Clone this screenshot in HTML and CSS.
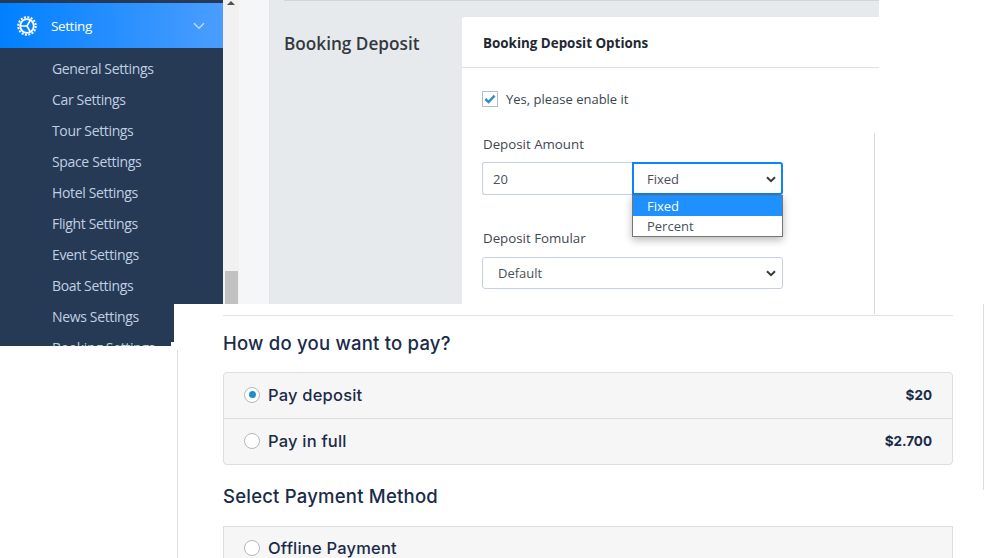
FILE: index.html
```html
<!DOCTYPE html>
<html lang="en">
<head>
<meta charset="utf-8">
<title>Booking Deposit</title>
<link rel="stylesheet" href="styles.css">
</head>
<body>
<div class="canvas">
  <section class="admin">
    <nav class="sidebar">
      <a class="active-item">
        <svg class="gear" viewBox="0 0 20 20" width="20" height="20" aria-hidden="true">
          <circle cx="10" cy="10" r="6.8" fill="none" stroke="#fff" stroke-width="1.8"/>
          <circle cx="10" cy="10" r="8.8" fill="none" stroke="#fff" stroke-width="2" stroke-dasharray="2 1.46"/>
          <path d="M10 10V3.5M10 10L4.4 13.3M10 10l5.6 3.3" transform="rotate(30 10 10)" fill="none" stroke="#fff" stroke-width="1.6"/>
        </svg>
        <span class="active-label">Setting</span>
        <svg class="chevron" viewBox="0 0 12 8" width="12" height="8" aria-hidden="true">
          <path d="M1 1.2l5 5 5-5" fill="none" stroke="#b9d8ff" stroke-width="1.6"/>
        </svg>
      </a>
      <ul class="submenu">
        <li>General Settings</li>
        <li>Car Settings</li>
        <li>Tour Settings</li>
        <li>Space Settings</li>
        <li>Hotel Settings</li>
        <li>Flight Settings</li>
        <li>Event Settings</li>
        <li>Boat Settings</li>
        <li>News Settings</li>
        <li>Booking Settings</li>
      </ul>
    </nav>
    <div class="scrollbar">
      <span class="scroll-arrow"></span>
      <span class="scroll-thumb"></span>
    </div>
    <div class="gutter"></div>
    <main class="content">
      <h2 class="section-title">Booking Deposit</h2>
      <div class="card">
        <header class="card-head">Booking Deposit Options</header>
        <div class="card-body">
          <label class="check-row">
            <span class="checkbox">
              <svg viewBox="0 0 12 10" width="12" height="10" aria-hidden="true">
                <path d="M1.3 5l3.3 3 6-6.4" fill="none" stroke="#2e8fd0" stroke-width="2.4"/>
              </svg>
            </span>
            Yes, please enable it
          </label>
          <div class="field-label">Deposit Amount</div>
          <div class="input-group">
            <div class="text-input">20</div>
            <div class="select focused">Fixed
              <svg class="caret" viewBox="0 0 10 7" width="10" height="7" aria-hidden="true"><path d="M1 1.2l4 4 4-4" fill="none" stroke="#343a40" stroke-width="2"/></svg>
            </div>
          </div>
          <div class="field-label second">Deposit Fomular</div>
          <div class="select wide">Default
            <svg class="caret" viewBox="0 0 10 7" width="10" height="7" aria-hidden="true"><path d="M1 1.2l4 4 4-4" fill="none" stroke="#343a40" stroke-width="2"/></svg>
          </div>
        </div>
      </div>
    </main>
  </section>

  <span class="rule-right"></span>

  <section class="checkout">
    <span class="rule-top"></span>
    <h3 class="pay-title first">How do you want to pay?</h3>
    <div class="options">
      <div class="option">
        <span class="radio on"></span><span class="option-name">Pay deposit</span><span class="price">$20</span>
      </div>
      <div class="option">
        <span class="radio"></span><span class="option-name">Pay in full</span><span class="price">$2.700</span>
      </div>
    </div>
    <h3 class="pay-title">Select Payment Method</h3>
    <div class="options open">
      <div class="option">
        <span class="radio"></span><span class="option-name">Offline Payment</span>
      </div>
    </div>
  </section>

  <span class="notch"></span>
  <span class="rule-left"></span>
  <span class="rule-far"></span>

  <div class="dropdown">
    <div class="dropdown-item selected">Fixed</div>
    <div class="dropdown-item">Percent</div>
  </div>
</div>
</body>
</html>
```

FILE: styles.css
```css
* { box-sizing: border-box; }
html, body { margin: 0; padding: 0; background: #fff; }
body { font-family: "Open Sans", "Noto Sans", sans-serif; color: #212529; }
.canvas { position: relative; width: 988px; height: 558px; overflow: hidden; }

/* top screenshot */
.admin { position: absolute; left: 0; top: 0; width: 879px; height: 346px; display: flex; overflow: hidden; align-items: flex-start; }
.sidebar { width: 223px; height: 346px; flex: none; background: #263a55; padding-top: 3px; overflow: hidden; }
.active-item { display: flex; align-items: center; height: 45px; padding-left: 17px; background: linear-gradient(90deg, #0080ff, #4b9dff); color: #fff; }
.gear { flex: none; }
.active-label { margin-left: 14px; font-size: 13.5px; letter-spacing: -0.4px; }
.chevron { margin-left: auto; margin-right: 18px; }
.submenu { list-style: none; margin: 0; padding: 5px 0 0 52px; color: #c0cfe2; font-size: 14px; letter-spacing: -0.35px; }
.submenu li { height: 31px; line-height: 31px; white-space: nowrap; }

.scrollbar { width: 16px; height: 304px; flex: none; background: #f1f1f1; display: flex; flex-direction: column; align-items: center; justify-content: space-between; }
.scroll-arrow { width: 0; height: 0; margin-top: 1px; border-left: 4px solid transparent; border-right: 4px solid transparent; border-bottom: 4px solid #505050; }
.scroll-thumb { width: 13px; height: 33px; background: #c1c1c1; }
.gutter { width: 31px; height: 304px; flex: none; background: #f4f6f8; border-right: 1px solid #e3e5e8; }
.content { flex: 1; height: 304px; background: #e7eaed; display: flex; padding: 17px 0 0 14px; position: relative; overflow: hidden; }
.content::before { content: ""; position: absolute; left: 14px; right: 0; top: 0; height: 1px; background: #d3d6d9; }
.section-title { width: 178px; flex: none; margin: 14px 0 0; font-size: 17.2px; line-height: 26px; font-weight: 600; color: #33393f; }
.card { flex: 1; background: #fff; border-radius: 3px 0 0 0; height: 320px; }
.card-head { height: 51px; border-bottom: 1px solid #dfe2e5; padding: 1px 21px 0; line-height: 50px; font-size: 13.4px; font-weight: 700; color: #1f2933; }
.card-body { padding: 22px 20px 0; }
.check-row { display: flex; align-items: center; height: 17px; font-size: 13px; color: #3a4550; }
.checkbox { width: 16px; height: 16px; margin-right: 8px; border: 1px solid #b4bcc4; display: flex; align-items: center; justify-content: center; background: #fff; }
.field-label { margin-top: 27px; padding-left: 1px; font-size: 13.3px; line-height: 20px; color: #3f4750; }
.field-label.second { margin-top: 0; position: relative; top: 33px; }
.input-group { display: flex; margin-top: 8px; width: 301px; height: 33px; }
.text-input { width: 150px; flex: none; height: 33px; border: 1px solid #c7d0e0; border-right: 0; border-radius: 3px 0 0 3px; padding-left: 10px; font-size: 13px; line-height: 32px; color: #495057; }
.select { position: relative; background: #fff; font-size: 13px; color: #495057; }
.select.focused { width: 151px; height: 33px; border: 2px solid #0a84ff; border-radius: 0 3px 3px 0; padding-left: 13px; line-height: 31px; }
.select.wide { width: 301px; height: 32px; margin-top: 42px; border: 1px solid #c7d0e0; border-radius: 3px; padding-left: 15px; line-height: 30px; }
.caret { position: absolute; right: 5px; top: 12px; }
.select.wide .caret { right: 6px; }

/* lines that overlap both screenshots */
.rule-right { position: absolute; left: 874px; top: 133px; width: 1px; height: 181px; background: #d7dbe0; z-index: 3; }
.rule-far { position: absolute; left: 983px; top: 304px; width: 1px; height: 186px; background: #dcdcdc; z-index: 3; }
.rule-left { position: absolute; left: 177px; top: 350px; width: 1px; height: 208px; background: #dcdcdc; z-index: 3; }
.notch { position: absolute; left: 171px; top: 342px; width: 3px; height: 4px; background: #fff; z-index: 2; }

/* bottom screenshot */
.checkout { position: absolute; left: 174px; top: 304px; width: 814px; height: 254px; background: #fff; padding: 27px 35px 0 49px; font-family: "Inter", "Noto Sans", sans-serif; color: #1a2b49; z-index: 2; }
.rule-top { position: absolute; left: 49px; right: 35px; top: 11px; height: 1px; background: #e2e2e2; }
.pay-title { margin: 0; font-size: 18.5px; line-height: 24px; font-weight: 500; letter-spacing: 0.22px; }
.pay-title.first { margin-bottom: 17px; }
.options { border: 1px solid #dedede; border-radius: 4px; background: #f6f6f6; margin-bottom: 19px; }
.options.open { margin-top: 18px; border-radius: 0; height: 60px; margin-bottom: 0; }
.option { display: flex; align-items: center; height: 45px; padding: 0 20px 2px; font-size: 16.5px; font-weight: 500; letter-spacing: 0.2px; }
.option + .option { height: 46px; border-top: 1px solid #dedede; }
.options.open .option { height: 43px; }
.radio { width: 16px; height: 16px; border: 1px solid #b3b8be; border-radius: 50%; background: #fff; margin-right: 8px; flex: none; position: relative; }
.radio.on::after { content: ""; position: absolute; left: 3.5px; top: 3.5px; width: 7px; height: 7px; border-radius: 50%; background: #1a8fc9; }
.option-name { flex: 1; }
.price { font-size: 13.5px; font-weight: 700; letter-spacing: 0; }

/* open native select list */
.dropdown { position: absolute; left: 632px; top: 195px; width: 151px; height: 42px; background: #fff; border: 1px solid #767676; box-shadow: 0 3px 8px rgba(0, 0, 0, 0.28); font-size: 13px; color: #495057; z-index: 4; }
.dropdown-item { height: 20px; line-height: 21px; padding-left: 14px; }
.dropdown-item.selected { background: #1e90ff; color: #fff; }
```
